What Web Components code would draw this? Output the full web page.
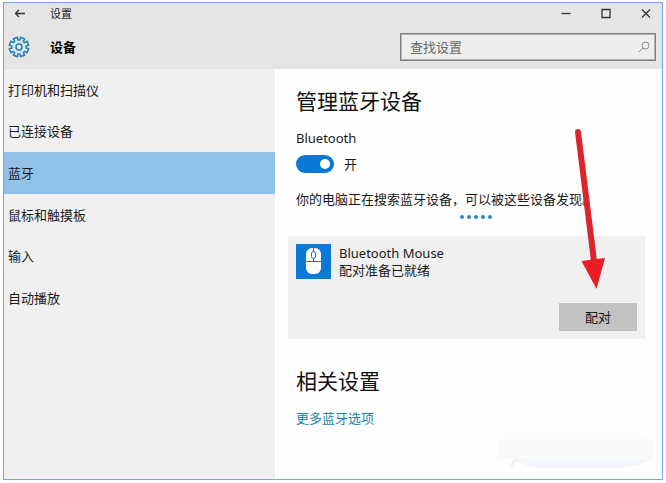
<!DOCTYPE html>
<html lang="zh-CN">
<head>
<meta charset="utf-8">
<meta name="viewport" content="width=device-width, initial-scale=1">
<title>设置</title>
<style>
  body {
    margin: 0;
    padding: 2px 3px 3px;
    background: #fff;
    color: #1a1a1a;
    font: 13px/18px "Noto Sans", "Noto Sans CJK SC", sans-serif;
  }
</style>
</head>
<body>
<settings-window>
  <title-bar slot="top">设置</title-bar>
  <settings-header slot="top" placeholder="查找设置">设备</settings-header>

  <settings-nav slot="nav">
    <nav-item>打印机和扫描仪</nav-item>
    <nav-item>已连接设备</nav-item>
    <nav-item selected>蓝牙</nav-item>
    <nav-item>鼠标和触摸板</nav-item>
    <nav-item>输入</nav-item>
    <nav-item>自动播放</nav-item>
  </settings-nav>

  <settings-section heading="管理蓝牙设备">
    <toggle-switch label="Bluetooth" checked>开</toggle-switch>
    <search-status>你的电脑正在搜索蓝牙设备，可以被这些设备发现。</search-status>
    <device-card name="Bluetooth Mouse" status="配对准备已就绪">
      配对
      <pointer-arrow slot="overlay"></pointer-arrow>
    </device-card>
  </settings-section>

  <settings-section heading="相关设置">
    <settings-link>更多蓝牙选项</settings-link>
  </settings-section>

  <corner-haze slot="corner"></corner-haze>
</settings-window>

<script>
class SettingsWindow extends HTMLElement {
  constructor() {
    super();
    this.attachShadow({ mode: 'open' });
  }

  connectedCallback() {
    this.shadowRoot.innerHTML = `
      <style>
        :host {
          display: flex;
          flex-direction: column;
          box-sizing: border-box;
          min-height: calc(100vh - 5px);
          border: 1px solid #73a5ea;
          background: #fefefe;
          position: relative;
        }
        header { background: #e5e5e5; }
        .body {
          flex: 1;
          display: grid;
          grid-template-columns: 271px 1fr;
        }
        aside { background: #f0f0f0; }
        main {
          display: flex;
          flex-direction: column;
          gap: 28px;
          padding: 18px 17px 32px 13px;
        }
      </style>
      <header><slot name="top"></slot></header>
      <div class="body">
        <aside><slot name="nav"></slot></aside>
        <main><slot></slot></main>
      </div>
      <slot name="corner"></slot>
    `;
  }
}

class TitleBar extends HTMLElement {
  constructor() {
    super();
    this.attachShadow({ mode: 'open' });
  }

  connectedCallback() {
    this.shadowRoot.innerHTML = `
      <style>
        :host {
          display: flex;
          align-items: center;
          height: 22px;
          padding: 0 10px;
          font-size: 11px;
        }
        button {
          display: flex;
          border: 0;
          padding: 0;
          background: none;
          color: #333;
        }
        svg { fill: none; stroke: currentColor; stroke-width: 1.3; }
        .title { flex: 1; margin-left: 24px; }
        .controls { display: flex; gap: 28px; }
      </style>
      <button aria-label="返回">
        <svg width="12" height="12"><path d="M11 5.500H1.500M5 2L1.500 5.500 5 9"/></svg>
      </button>
      <span class="title"><slot></slot></span>
      <div class="controls">
        <button aria-label="最小化">
          <svg width="12" height="12"><path d="M1.500 5.500h9"/></svg>
        </button>
        <button aria-label="最大化">
          <svg width="12" height="12"><path d="M2 1.500h8v8H2z"/></svg>
        </button>
        <button aria-label="关闭">
          <svg width="12" height="12"><path d="M2 1.500l8 8M10 1.500l-8 8"/></svg>
        </button>
      </div>
    `;
  }
}

class SettingsHeader extends HTMLElement {
  constructor() {
    super();
    this.attachShadow({ mode: 'open' });
  }

  // Outline of a gear with eight flat teeth
  gearPath() {
    const points = [];
    for (let i = 0; i < 8; i++) {
      [[-14, 7.2], [-13, 9.9], [13, 9.9], [14, 7.2]].forEach(([offset, r]) => {
        const a = (i * 45 + 22.5 + offset) * Math.PI / 180;
        points.push(`${(11 + r * Math.sin(a)).toFixed(2)} ${(11 - r * Math.cos(a)).toFixed(2)}`);
      });
    }
    return `M${points.join('L')}Z`;
  }

  connectedCallback() {
    this.shadowRoot.innerHTML = `
      <style>
        :host {
          display: flex;
          align-items: center;
          height: 44px;
          padding: 0 6px 0 4px;
        }
        .gear {
          fill: #d5e7f1;
          stroke: #2b7fb0;
          stroke-width: 1.5;
          stroke-linejoin: round;
        }
        h1 {
          flex: 1;
          margin: 0 0 0 20px;
          font-size: 13px;
          font-weight: bold;
          line-height: 18px;
          color: #000;
        }
        label {
          display: flex;
          align-items: center;
          box-sizing: border-box;
          width: 256px;
          height: 28px;
          padding: 0 5px 0 9px;
          border: 1px solid #808080;
          outline: 1px solid #b4b4b4;
          outline-offset: -2px;
          background: #eee;
        }
        input {
          flex: 1;
          min-width: 0;
          padding: 0;
          border: 0;
          outline: 0;
          background: none;
          font: inherit;
        }
        input::placeholder { color: #666; opacity: 1; }
        .lens { fill: none; stroke: #888; stroke-width: 1; }
      </style>
      <svg class="gear" width="22" height="22">
        <path d="${this.gearPath()}"/>
        <circle cx="11" cy="11" r="3" fill="#e5e5e5"/>
      </svg>
      <h1><slot></slot></h1>
      <label>
        <input type="text" aria-label="${this.getAttribute('placeholder')}" placeholder="${this.getAttribute('placeholder')}">
        <svg class="lens" width="12" height="12"><circle cx="7.500" cy="4.500" r="3.500"/><path d="M5 7L.8 11.200"/></svg>
      </label>
    `;
  }
}

class SettingsNav extends HTMLElement {
  constructor() {
    super();
    this.attachShadow({ mode: 'open' });
  }

  connectedCallback() {
    this.shadowRoot.innerHTML = `
      <style>
        nav {
          display: grid;
          grid-auto-rows: 1fr;
          height: 250px;
        }
      </style>
      <nav><slot></slot></nav>
    `;
  }
}

class NavItem extends HTMLElement {
  constructor() {
    super();
    this.attachShadow({ mode: 'open' });
  }

  connectedCallback() {
    this.shadowRoot.innerHTML = `
      <style>
        :host { display: grid; }
        :host([selected]) { background: #91c1e7; }
        a {
          display: flex;
          align-items: center;
          padding: 0 4px;
          color: inherit;
          text-decoration: none;
        }
      </style>
      <a href="#"><slot></slot></a>
    `;
  }
}

class SettingsSection extends HTMLElement {
  constructor() {
    super();
    this.attachShadow({ mode: 'open' });
  }

  connectedCallback() {
    this.shadowRoot.innerHTML = `
      <style>
        :host { display: block; }
        h2 {
          margin: 0 0 14px 8px;
          font-size: 21px;
          font-weight: normal;
          line-height: 28px;
          color: #111;
        }
      </style>
      <h2>${this.getAttribute('heading')}</h2>
      <slot></slot>
    `;
  }
}

class ToggleSwitch extends HTMLElement {
  constructor() {
    super();
    this.attachShadow({ mode: 'open' });
  }

  connectedCallback() {
    this.shadowRoot.innerHTML = `
      <style>
        :host { display: block; margin-left: 8px; }
        label { display: block; }
        .row {
          display: flex;
          align-items: center;
          gap: 10px;
          margin-top: 8px;
        }
        input {
          appearance: none;
          display: flex;
          align-items: center;
          box-sizing: border-box;
          width: 38px;
          height: 18px;
          margin: 0;
          padding: 0 4px;
          border-radius: 9px;
          background: #999;
        }
        input::before {
          content: "";
          width: 10px;
          height: 10px;
          border-radius: 50%;
          background: #fff;
        }
        input:checked {
          justify-content: flex-end;
          background: #0a78d6;
        }
      </style>
      <label for="switch">${this.getAttribute('label')}</label>
      <div class="row">
        <input id="switch" type="checkbox" role="switch" ${this.hasAttribute('checked') ? 'checked' : ''}>
        <span><slot></slot></span>
      </div>
    `;
  }
}

class SearchStatus extends HTMLElement {
  constructor() {
    super();
    this.attachShadow({ mode: 'open' });
  }

  connectedCallback() {
    this.shadowRoot.innerHTML = `
      <style>
        :host { display: block; margin: 17px 0 17px 8px; }
        .dots {
          display: flex;
          justify-content: center;
          gap: 3px;
          margin: 7px -10px 0 0;
        }
        i {
          width: 4px;
          height: 4px;
          border-radius: 50%;
          background: #2f86c4;
        }
      </style>
      <div role="status"><slot></slot></div>
      <div class="dots"><i></i><i></i><i></i><i></i><i></i></div>
    `;
  }
}

class DeviceCard extends HTMLElement {
  constructor() {
    super();
    this.attachShadow({ mode: 'open' });
  }

  connectedCallback() {
    this.shadowRoot.innerHTML = `
      <style>
        :host {
          display: flex;
          flex-direction: column;
          gap: 24px;
          padding: 8px;
          background: #f0f0f0;
          position: relative;
        }
        .device {
          display: flex;
          align-items: center;
          gap: 8px;
          line-height: 17px;
        }
        .icon { background: #0a78d6; }
        button {
          align-self: flex-end;
          width: 78px;
          height: 28px;
          padding: 0;
          border: 0;
          background: #c2c2c2;
          color: #111;
          font: inherit;
        }
      </style>
      <div class="device">
        <svg class="icon" width="35" height="35">
          <rect x="10" y="4" width="15" height="26" rx="6" fill="#fff"/>
          <path d="M10 17.500h15M17.500 4v4M17.500 14v3" fill="none" stroke="#0a78d6"/>
          <rect x="15.500" y="7.500" width="4" height="7" rx="2" fill="#fff" stroke="#0a78d6"/>
        </svg>
        <div>
          <div>${this.getAttribute('name')}</div>
          <div>${this.getAttribute('status')}</div>
        </div>
      </div>
      <button type="button"><slot></slot></button>
      <slot name="overlay"></slot>
    `;
  }
}

// Red arrow lying over the card, pointing at its button
class PointerArrow extends HTMLElement {
  constructor() {
    super();
    this.attachShadow({ mode: 'open' });
  }

  connectedCallback() {
    this.shadowRoot.innerHTML = `
      <style>
        :host {
          position: absolute;
          right: 35px;
          bottom: 49px;
          pointer-events: none;
        }
        svg { display: block; }
      </style>
      <svg width="40" height="165">
        <path d="M8 7L24 136" stroke="#d9252b" stroke-width="6" stroke-linecap="round"/>
        <path d="M11.500 136L35 133L26.500 164z" fill="#ea1c24"/>
      </svg>
    `;
  }
}

class SettingsLink extends HTMLElement {
  constructor() {
    super();
    this.attachShadow({ mode: 'open' });
  }

  connectedCallback() {
    this.shadowRoot.innerHTML = `
      <style>
        :host { display: block; margin-left: 8px; }
        a { color: #1b83a8; text-decoration: none; }
      </style>
      <a href="#"><slot></slot></a>
    `;
  }
}

// Very pale smudge in the bottom right corner of the window
class CornerHaze extends HTMLElement {
  constructor() {
    super();
    this.attachShadow({ mode: 'open' });
  }

  connectedCallback() {
    this.shadowRoot.innerHTML = `
      <style>
        :host {
          position: absolute;
          right: 7px;
          bottom: 6px;
          pointer-events: none;
        }
        svg { display: block; }
      </style>
      <svg width="160" height="48">
        <path d="M3 14Q20 2 50 1Q130 0 158 14z" fill="#fdfdfd"/>
        <path d="M3 14h155v20H3z" fill="#fafafa"/>
        <path d="M20 34h137q-8 6-30 9H44q-14-1-24-9z" fill="#f3f7fb"/>
        <path d="M17 42q-1-7 6-7" fill="none" stroke="#eee" stroke-width="2"/>
      </svg>
    `;
  }
}

customElements.define('settings-window', SettingsWindow);
customElements.define('title-bar', TitleBar);
customElements.define('settings-header', SettingsHeader);
customElements.define('settings-nav', SettingsNav);
customElements.define('nav-item', NavItem);
customElements.define('settings-section', SettingsSection);
customElements.define('toggle-switch', ToggleSwitch);
customElements.define('search-status', SearchStatus);
customElements.define('device-card', DeviceCard);
customElements.define('pointer-arrow', PointerArrow);
customElements.define('settings-link', SettingsLink);
customElements.define('corner-haze', CornerHaze);
</script>
</body>
</html>
